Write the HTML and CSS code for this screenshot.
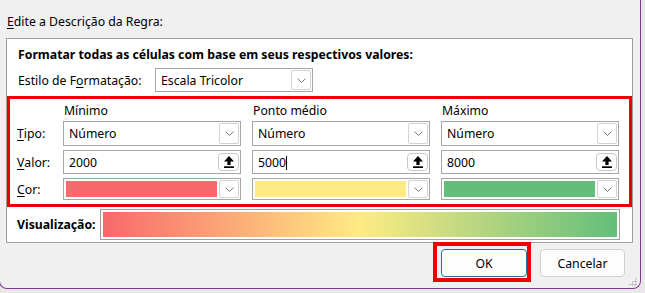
FILE: index.html
```html
<!DOCTYPE html>
<html lang="pt">
<head>
<meta charset="utf-8">
<link rel="stylesheet" href="styles.css">
</head>
<body>
<div class="dialog">
  <div class="caption"><u>E</u>dite a Descrição da Regra:</div>
  <div class="panel">
    <div class="title">Formatar todas as células com base em seus respectivos valores:</div>
    <div class="style-row">
      <span class="style-label">Estilo de F<u>o</u>rmatação:</span>
      <div class="combo combo-style">
        <span class="combo-text">Escala Tricolor</span>
        <span class="drop"><svg width="9" height="5" viewBox="0 0 9 5"><polyline points="0.5,0.5 4.5,4.5 8.5,0.5" fill="none" stroke="#7a7a7a" stroke-width="1"/></svg></span>
      </div>
    </div>
    <div class="scale">
      <span></span>
      <span class="head">Mínimo</span>
      <span class="head">Ponto médio</span>
      <span class="head">Máximo</span>

      <span class="rlabel"><u>T</u>ipo:</span>
      <div class="combo"><span class="combo-text">Número</span><span class="drop"><svg width="9" height="5" viewBox="0 0 9 5"><polyline points="0.5,0.5 4.5,4.5 8.5,0.5" fill="none" stroke="#7a7a7a" stroke-width="1"/></svg></span></div>
      <div class="combo"><span class="combo-text">Número</span><span class="drop"><svg width="9" height="5" viewBox="0 0 9 5"><polyline points="0.5,0.5 4.5,4.5 8.5,0.5" fill="none" stroke="#7a7a7a" stroke-width="1"/></svg></span></div>
      <div class="combo"><span class="combo-text">Número</span><span class="drop"><svg width="9" height="5" viewBox="0 0 9 5"><polyline points="0.5,0.5 4.5,4.5 8.5,0.5" fill="none" stroke="#7a7a7a" stroke-width="1"/></svg></span></div>

      <span class="rlabel"><u>V</u>alor:</span>
      <div class="field"><span class="field-text">2000</span><span class="pick"><svg width="10" height="12" viewBox="0 0 10 12"><path d="M5 0 L10 5.5 L6.6 5.5 L6.6 9 L3.4 9 L3.4 5.5 L0 5.5 Z" fill="#000"/><rect x="0" y="10.3" width="10" height="1.7" fill="#000"/></svg></span></div>
      <div class="field"><span class="field-text">5000<span class="caret"></span></span><span class="pick"><svg width="10" height="12" viewBox="0 0 10 12"><path d="M5 0 L10 5.5 L6.6 5.5 L6.6 9 L3.4 9 L3.4 5.5 L0 5.5 Z" fill="#000"/><rect x="0" y="10.3" width="10" height="1.7" fill="#000"/></svg></span></div>
      <div class="field"><span class="field-text">8000</span><span class="pick"><svg width="10" height="12" viewBox="0 0 10 12"><path d="M5 0 L10 5.5 L6.6 5.5 L6.6 9 L3.4 9 L3.4 5.5 L0 5.5 Z" fill="#000"/><rect x="0" y="10.3" width="10" height="1.7" fill="#000"/></svg></span></div>

      <span class="rlabel"><u>C</u>or:</span>
      <div class="combo color"><span class="swatch swatch-red"></span><span class="drop"><svg width="9" height="5" viewBox="0 0 9 5"><polyline points="0.5,0.5 4.5,4.5 8.5,0.5" fill="none" stroke="#7a7a7a" stroke-width="1"/></svg></span></div>
      <div class="combo color"><span class="swatch swatch-yellow"></span><span class="drop"><svg width="9" height="5" viewBox="0 0 9 5"><polyline points="0.5,0.5 4.5,4.5 8.5,0.5" fill="none" stroke="#7a7a7a" stroke-width="1"/></svg></span></div>
      <div class="combo color"><span class="swatch swatch-green"></span><span class="drop"><svg width="9" height="5" viewBox="0 0 9 5"><polyline points="0.5,0.5 4.5,4.5 8.5,0.5" fill="none" stroke="#7a7a7a" stroke-width="1"/></svg></span></div>
    </div>
    <div class="preview">
      <span class="preview-label">Visualização:</span>
      <div class="preview-box"><div class="gradient"></div></div>
    </div>
  </div>
  <div class="buttons">
    <div class="ok-wrap">
      <button class="btn btn-ok">OK</button>
      <span class="highlight"></span>
    </div>
    <button class="btn">Cancelar</button>
  </div>
  <span class="grip"></span>
</div>
</body>
</html>
```

FILE: styles.css
```css
* { box-sizing: border-box; }
html, body { margin: 0; padding: 0; }
body {
  width: 645px;
  height: 293px;
  overflow: hidden;
  background: #e9e7ea;
  font-family: "Noto Sans", "Open Sans", sans-serif;
  font-size: 12.25px;
  color: #000;
}
u { text-decoration: underline; text-underline-offset: 2px; }

.dialog {
  position: relative;
  width: 642px;
  height: 289px;
  margin-left: -1px;
  background: #f0f0f0;
  border: 1px solid #7b3a8e;
  border-top: none;
  border-radius: 0 0 8px 8px;
  padding: 14px 0 0 7px;
}
.caption {
  height: 16px;
  line-height: 16px;
  margin-bottom: 8px;
}
.panel {
  width: 627px;
  margin-left: -1px;
  background: #fff;
  border: 1px solid #a0a0a0;
  padding: 8px 0 2px 0;
}
.title {
  font-weight: 700;
  height: 16px;
  line-height: 16px;
  padding-left: 11px;
}
.style-row {
  display: flex;
  align-items: center;
  margin-top: 5px;
  padding-left: 11px;
  height: 24px;
}
.style-label { width: 137px; }
.combo, .field {
  display: flex;
  align-items: center;
  border: 1px solid #a6a6a6;
  background: #fff;
  height: 100%;
}
.combo-style { width: 158px; }
.combo-text, .field-text {
  flex: 1;
  padding-left: 5px;
  white-space: nowrap;
}
.drop {
  width: 20px;
  align-self: stretch;
  margin: 1px 1px 1px 0;
  border: 1px solid #d3d3d3;
  border-radius: 2px;
  display: flex;
  align-items: center;
  justify-content: center;
}
.scale {
  margin-top: 4px;
  border: 3px solid #ee0000;
  display: grid;
  grid-template-columns: 35px 178px 178px 178px;
  grid-template-rows: 18px 25px 24px 22px;
  column-gap: 11px;
  row-gap: 4px;
  padding: 0 0 4px 7px;
}
.head {
  display: flex;
  align-items: center;
  padding-left: 1px;
  padding-top: 4px;
}
.rlabel {
  display: flex;
  align-items: center;
}
.pick {
  width: 21px;
  align-self: stretch;
  margin: 2px 1px 2px 0;
  border: 1px solid #c8c8c8;
  border-radius: 4px;
  display: flex;
  align-items: center;
  justify-content: center;
}
.caret {
  display: inline-block;
  width: 1px;
  height: 14px;
  background: #000;
  vertical-align: -3px;
}
.color { padding-left: 2px; }
.swatch {
  flex: 1;
  align-self: stretch;
  margin: 2px 2px 2px 0;
}
.swatch-red { background: #f8696b; }
.swatch-yellow { background: #ffeb84; }
.swatch-green { background: #63be7b; }

.preview {
  display: flex;
  align-items: center;
  margin-top: 2px;
  padding-left: 10px;
  height: 31px;
}
.preview-label {
  font-weight: 700;
  width: 83px;
}
.preview-box {
  width: 520px;
  height: 31px;
  border: 1px solid #a0a0a0;
  padding: 2px;
  background: #fff;
}
.gradient {
  height: 100%;
  background: linear-gradient(to right, #f8696b, #ffeb84, #63be7b);
}

.buttons {
  display: flex;
  justify-content: flex-end;
  gap: 13px;
  margin-top: 6px;
  padding-right: 15px;
}
.ok-wrap { position: relative; display: flex; }
.btn {
  width: 85px;
  height: 28px;
  font-family: "Noto Sans", "Open Sans", sans-serif;
  font-size: 12.25px;
  color: #000;
  background: #fdfdfd;
  border: 1px solid #d0d0d0;
  border-radius: 4px;
  padding: 0;
}
.btn-ok {
  width: 86px;
  border: 1px solid #2f6d9a;
}
.highlight {
  position: absolute;
  left: -8px;
  right: -4px;
  top: -7px;
  bottom: -5px;
  border: 4px solid #ee0000;
}
.grip {
  position: absolute;
  right: 3px;
  bottom: 2px;
  width: 9px;
  height: 9px;
  background:
    radial-gradient(circle, #b8b8b8 0.9px, transparent 1.2px) 0 0 / 3px 3px;
  clip-path: polygon(100% 0, 100% 100%, 0 100%);
}
```
